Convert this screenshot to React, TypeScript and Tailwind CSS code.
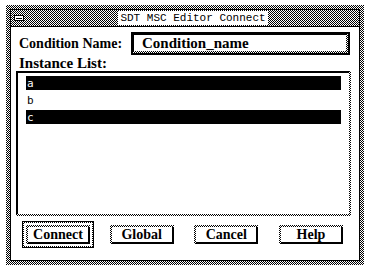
import React from "react";

const checker =
  "bg-[conic-gradient(#000_90deg,#fff_90deg_180deg,#000_180deg_270deg,#fff_270deg)] bg-[length:2px_2px]";

const PushButton = ({ label, isDefault }: { label: string; isDefault?: boolean }) => {
  const btn = (
    <div className={`${checker} pt-[2px] pl-[2px]`}>
      <div className="w-[62px] h-[17px] bg-white border-r-2 border-b-2 border-black flex items-center justify-center font-['Liberation_Serif',serif] font-bold text-[14px] leading-none text-black">
        {label}
      </div>
    </div>
  );
  if (!isDefault) return <div className="p-[5px]">{btn}</div>;
  return (
    <div className="border border-black">
      <div className={`${checker} p-[1px]`}>
        <div className="bg-white p-[2px]">{btn}</div>
      </div>
    </div>
  );
};

const App = () => {
  const items = [
    { name: "a", selected: true },
    { name: "b", selected: false },
    { name: "c", selected: true },
  ];

  return (
    <div className="w-[370px] h-[270px] bg-white pl-[6px] pt-[5px]">
      <div className={`${checker} w-[358px] h-[260px] p-[4px] flex flex-col`}>
        <div className="flex-1 border border-black bg-white flex flex-col">
          {/* title bar */}
          <div className={`${checker} h-[17px] border-b border-black flex items-center relative`}>
            <div className="w-[16px] h-[16px] flex items-center justify-center">
              <div className="w-[10px] h-[6px] bg-white border border-black flex items-center justify-center">
                <div className="w-[6px] h-px bg-black" />
              </div>
            </div>
            <div className="flex-1 flex justify-center">
              <span className="bg-white px-[2px] font-['Liberation_Mono',monospace] text-[11px] leading-[14px] text-black">
                SDT MSC Editor Connect
              </span>
            </div>
          </div>

          <div className="flex-1 flex flex-col px-[4px] pt-[5px]">
            <div className="flex items-center">
              <span className="w-[116px] pl-[4px] font-['Liberation_Serif',serif] font-bold text-[14px] text-black">
                Condition Name:
              </span>
              <div className="border-2 border-black">
                <div className={`${checker} pr-[2px] pb-[2px]`}>
                  <div className="w-[213px] h-[17px] bg-white border-t border-l border-black pl-[8px] flex items-center font-['Liberation_Serif',serif] font-bold text-[15px] text-black">
                    Condition_name
                  </div>
                </div>
              </div>
            </div>

            <span className="pl-[4px] font-['Liberation_Serif',serif] font-bold text-[15px] leading-[16px] text-black">
              Instance List:
            </span>

            <div className={`${checker} ml-[1px] w-[335px] pr-[2px] pb-[2px]`}>
              <div className="h-[143px] bg-white border-t-2 border-l-2 border-black pt-[3px] pl-[8px] pr-[8px] flex flex-col gap-[3px]">
                {items.map((it) => (
                  <div
                    key={it.name}
                    className={`h-[14px] pl-[1px] flex items-center font-['DejaVu_Sans_Mono',monospace] text-[11px] leading-none ${
                      it.selected ? "bg-black text-white" : "bg-white text-black"
                    }`}
                  >
                    {it.name}
                  </div>
                ))}
              </div>
            </div>

            <div className="flex items-center justify-between pl-[7px] pr-[7px] mt-[4px]">
              <PushButton label="Connect" isDefault />
              <PushButton label="Global" />
              <PushButton label="Cancel" />
              <PushButton label="Help" />
            </div>
          </div>
        </div>
      </div>
    </div>
  );
};

export default App;
